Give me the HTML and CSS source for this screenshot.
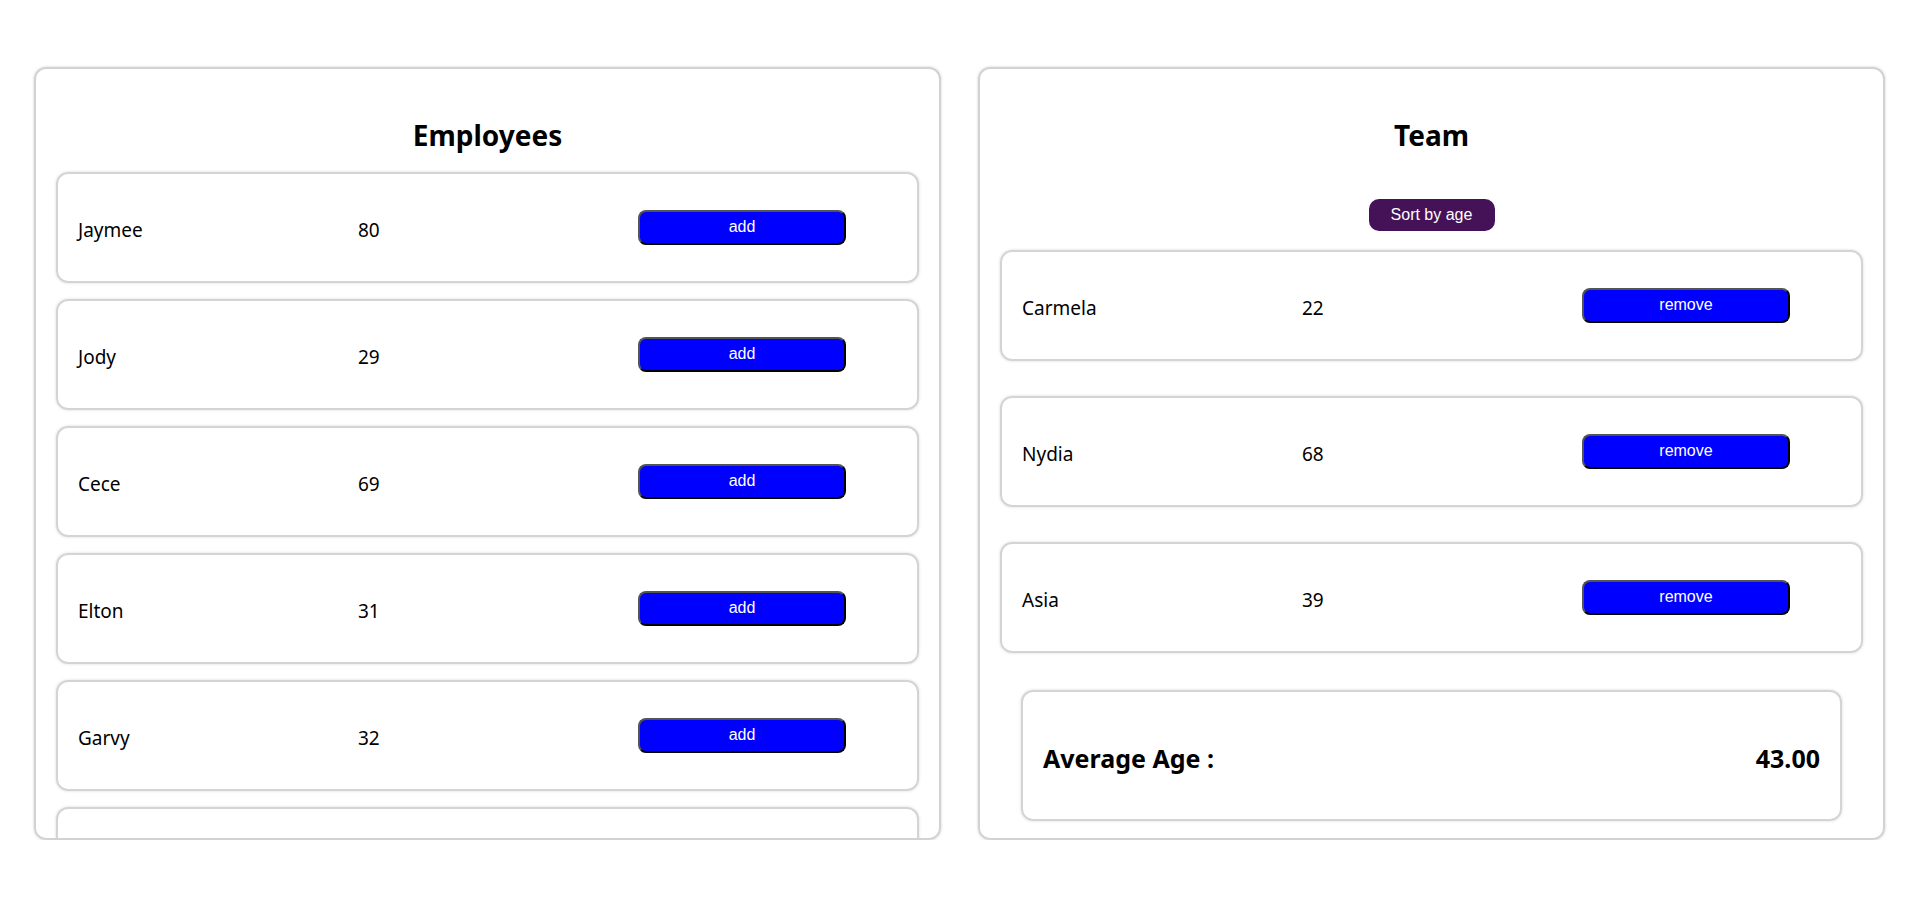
FILE: index.html
```html
<!DOCTYPE html>
<html lang="en">
<head>
<meta charset="utf-8">
<title>Employees and Team</title>
<link rel="stylesheet" href="styles.css">
</head>
<body>
<main class="board">
  <section class="panel">
    <h2 class="panel-title">Employees</h2>
    <div class="list list-employees">
      <div class="row"><span class="cell">Jaymee</span><span class="cell">80</span><button class="btn">add</button></div>
      <div class="row"><span class="cell">Jody</span><span class="cell">29</span><button class="btn">add</button></div>
      <div class="row"><span class="cell">Cece</span><span class="cell">69</span><button class="btn">add</button></div>
      <div class="row"><span class="cell">Elton</span><span class="cell">31</span><button class="btn">add</button></div>
      <div class="row"><span class="cell">Garvy</span><span class="cell">32</span><button class="btn">add</button></div>
      <div class="row row-empty"></div>
    </div>
  </section>
  <section class="panel">
    <h2 class="panel-title">Team</h2>
    <div class="sort-wrap"><button class="sort-btn">Sort by age</button></div>
    <div class="list list-team">
      <div class="row"><span class="cell">Carmela</span><span class="cell">22</span><button class="btn">remove</button></div>
      <div class="row"><span class="cell">Nydia</span><span class="cell">68</span><button class="btn">remove</button></div>
      <div class="row"><span class="cell">Asia</span><span class="cell">39</span><button class="btn">remove</button></div>
    </div>
    <div class="average">
      <span class="avg-label">Average Age :</span>
      <span class="avg-value">43.00</span>
    </div>
  </section>
</main>
</body>
</html>
```

FILE: styles.css
```css
html, body {
  margin: 0;
  padding: 0;
  background: #ffffff;
}

body {
  font-family: "Noto Sans", "Open Sans", sans-serif;
  color: #000000;
}

.board {
  display: grid;
  grid-template-columns: 907px 907px;
  column-gap: 37px;
  padding: 67px 35px 0 34px;
}

.panel {
  box-sizing: border-box;
  height: 773px;
  border: 2px solid #d2d2d2;
  border-radius: 12px;
  box-shadow: 0 0 3px rgba(0, 0, 0, 0.18);
  padding: 20px;
  overflow: hidden;
  display: flex;
  flex-direction: column;
}

.panel-title {
  margin: 27px 0 18px;
  font-size: 28px;
  line-height: 38px;
  font-weight: 700;
  text-align: center;
}

.list {
  display: flex;
  flex-direction: column;
  flex-shrink: 0;
}

.list-employees {
  gap: 16px;
}

.list-team {
  gap: 35px;
  margin-top: 19px;
}

.row {
  box-sizing: border-box;
  flex-shrink: 0;
  height: 111px;
  border: 2px solid #d4d4d4;
  border-radius: 12px;
  box-shadow: 0 0 3px rgba(0, 0, 0, 0.15);
  padding: 0 18px 0 20px;
  display: grid;
  grid-template-columns: 280px 280px 208px;
  align-items: center;
}

.cell {
  font-size: 19px;
  line-height: 26px;
  padding-top: 4px;
}

.btn {
  box-sizing: border-box;
  width: 208px;
  height: 35px;
  margin-top: -1px;
  border: 2px outset #000000;
  border-radius: 8px;
  background: #0000ff;
  color: #ffffff;
  font-family: "Liberation Sans", Arial, sans-serif;
  font-size: 16px;
  padding: 0;
  cursor: pointer;
}

.sort-wrap {
  display: flex;
  justify-content: center;
  margin-top: 27px;
}

.sort-btn {
  box-sizing: border-box;
  width: 126px;
  height: 32px;
  border: none;
  border-radius: 10px;
  background: #451257;
  color: #ffffff;
  font-family: "Liberation Sans", Arial, sans-serif;
  font-size: 16px;
  padding: 0;
  cursor: pointer;
}

.average {
  box-sizing: border-box;
  flex-shrink: 0;
  height: 131px;
  margin: 37px 21px 0;
  border: 2px solid #d4d4d4;
  border-radius: 12px;
  box-shadow: 0 0 3px rgba(0, 0, 0, 0.15);
  padding: 0 20px;
  display: flex;
  justify-content: space-between;
  align-items: center;
  font-size: 25px;
  font-weight: 700;
}

.avg-label,
.avg-value {
  padding-top: 4px;
}
```
